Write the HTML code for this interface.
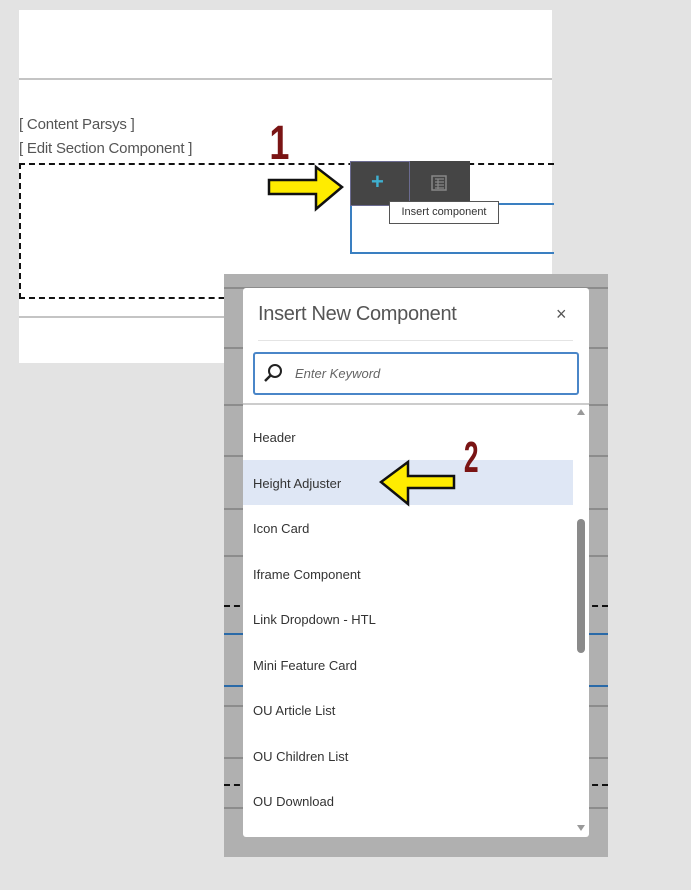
<!DOCTYPE html>
<html><head><style>
body{margin:0;width:691px;height:890px;background:#e3e3e3;position:relative;overflow:hidden;font-family:"Liberation Sans",sans-serif}
.a{position:absolute}
.it{position:absolute;left:253px;font-size:13px;color:#333}
.gl{position:absolute;height:2px;background:#8c8c8c}
</style></head><body>
<div class="a" style="left:19px;top:10px;width:533px;height:353px;background:#fff"></div>
<div class="a" style="left:19px;top:78px;width:533px;height:2px;background:#c4c4c4"></div>
<div class="a" style="left:19px;top:316px;width:205px;height:2px;background:#c4c4c4"></div>
<div class="a" style="left:19px;top:116px;font-size:15px;color:#555;letter-spacing:-0.2px">[ Content Parsys ]</div>
<div class="a" style="left:19px;top:140px;font-size:15px;color:#555;letter-spacing:-0.2px">[ Edit Section Component ]</div>
<div class="a" style="left:19px;top:163px;width:533px;height:132px;border:2px dashed #111;border-right:none;box-sizing:content-box"></div>
<div class="a" style="left:350px;top:203px;width:202px;height:47px;border:2px solid #3a7fc1;border-right:none"></div>
<div class="a" style="left:350px;top:161px;width:120px;height:45px;background:#454545"></div>
<div class="a" style="left:350px;top:161px;width:58px;height:43px;border:1px solid #6b6b90;"></div>
<div class="a" style="left:371px;top:169px;font-size:22px;color:#3fb0d0;font-weight:bold">+</div>
<svg class="a" style="left:431px;top:175px" width="16" height="16"><rect x="1" y="1" width="14" height="14" fill="none" stroke="#888" stroke-width="1.5"/><path d="M4 4h9M4 7h9M4 10h9M4 13h9M7 4v10" stroke="#888" stroke-width="1.2"/></svg>
<div class="a" style="left:389px;top:201px;width:108px;height:21px;background:#fff;border:1px solid #555;font-size:11px;color:#333;line-height:21px;text-align:center">Insert component</div>
<div class="a" style="left:266px;top:120px;font-size:48px;font-weight:bold;color:#7a1414;font-family:'Liberation Sans',sans-serif;transform:scaleX(.75);line-height:1">1</div>
<svg class="a" style="left:266px;top:164px" width="80" height="50"><polygon points="3,16 50,16 50,3 76,23 50,45 50,30 3,30" fill="#ffec00" stroke="#111" stroke-width="2.5"/></svg>
<div class="a" style="left:224px;top:274px;width:384px;height:583px;background:#b0b0b0"></div>
<div class="gl" style="left:224px;top:287px;width:384px"></div>
<div class="gl" style="left:224px;top:347px;width:384px"></div>
<div class="gl" style="left:224px;top:404px;width:384px"></div>
<div class="gl" style="left:224px;top:455px;width:384px"></div>
<div class="gl" style="left:224px;top:508px;width:384px"></div>
<div class="gl" style="left:224px;top:555px;width:384px"></div>
<div class="a" style="left:224px;top:605px;width:384px;border-top:2px dashed #111"></div>
<div class="a" style="left:224px;top:633px;width:384px;height:2px;background:#2a6aa8"></div>
<div class="a" style="left:224px;top:685px;width:384px;height:2px;background:#2a6aa8"></div>
<div class="gl" style="left:224px;top:705px;width:384px"></div>
<div class="gl" style="left:224px;top:757px;width:384px"></div>
<div class="a" style="left:224px;top:784px;width:384px;border-top:2px dashed #111"></div>
<div class="gl" style="left:224px;top:807px;width:384px"></div>
<div class="a" style="left:243px;top:288px;width:346px;height:549px;background:#fff;border-radius:3px"></div>
<div class="a" style="left:258px;top:303px;font-size:20px;color:#555;letter-spacing:-0.3px">Insert New Component</div>
<div class="a" style="left:556px;top:304px;font-size:18px;color:#555">×</div>
<div class="a" style="left:258px;top:340px;width:315px;height:1px;background:#e4e4e4"></div>
<div class="a" style="left:253px;top:352px;width:322px;height:39px;border:2px solid #4a86c8;border-radius:3px"></div>
<svg class="a" style="left:263px;top:363px" width="20" height="20"><circle cx="12" cy="8" r="6" fill="none" stroke="#222" stroke-width="2"/><path d="M8 12L2 18" stroke="#222" stroke-width="2.5"/></svg>
<div class="a" style="left:295px;top:366px;font-size:13px;font-style:italic;color:#666">Enter Keyword</div>
<div class="a" style="left:243px;top:403px;width:346px;height:2px;background:#ccc"></div>
<div class="a" style="left:243px;top:460px;width:330px;height:45px;background:#dfe7f5"></div>
<div class="it" style="top:430px">Header</div>
<div class="it" style="top:476px">Height Adjuster</div>
<div class="it" style="top:521px">Icon Card</div>
<div class="it" style="top:567px">Iframe Component</div>
<div class="it" style="top:612px">Link Dropdown - HTL</div>
<div class="it" style="top:658px">Mini Feature Card</div>
<div class="it" style="top:703px">OU Article List</div>
<div class="it" style="top:749px">OU Children List</div>
<div class="it" style="top:794px">OU Download</div>
<div class="a" style="left:577px;top:519px;width:8px;height:134px;background:#8a8a8a;border-radius:4px"></div>
<div class="a" style="left:577px;top:409px;width:0;height:0;border:4px solid transparent;border-bottom:6px solid #999;border-top:none"></div>
<div class="a" style="left:577px;top:825px;width:0;height:0;border:4px solid transparent;border-top:6px solid #999;border-bottom:none"></div>
<div class="a" style="left:459px;top:436px;font-size:44px;font-weight:bold;color:#7a1414;font-family:'Liberation Sans',sans-serif;transform:scaleX(.6);line-height:1">2</div>
<svg class="a" style="left:378px;top:458px" width="80" height="50"><polygon points="76,18 30,18 30,4 3,24 30,46 30,30 76,30" fill="#ffec00" stroke="#111" stroke-width="2.5"/></svg>
</body></html>
